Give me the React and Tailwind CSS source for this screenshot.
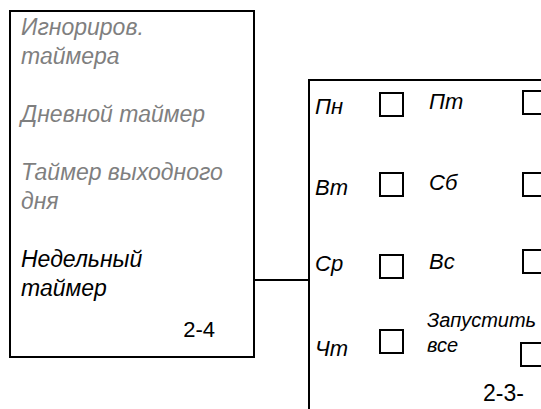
const font = { fontFamily: '"Liberation Sans", Arial, sans-serif' };

function Box() {
  return <div className="w-[25px] h-[25px] border-2 border-black shrink-0 bg-white" />;
}

function MenuItem({ lines, active }) {
  return (
    <div className={`italic text-[23px] leading-[29px] ${active ? "text-black" : "text-[#7f7f7f]"}`}>
      {lines.map((l) => (
        <div key={l} className="whitespace-nowrap">{l}</div>
      ))}
    </div>
  );
}

export default function App() {
  return (
    <div className="w-[541px] h-[409px] overflow-hidden bg-white flex items-start pt-[10px]" style={font}>
      <div className="ml-[9px] w-[246px] h-[348px] border-2 border-black shrink-0 flex flex-col pl-[10px] pt-[1px] gap-[29px]">
        <MenuItem lines={["Игнориров.", "таймера"]} />
        <MenuItem lines={["Дневной таймер"]} />
        <MenuItem lines={["Таймер выходного", "дня"]} />
        <div className="flex flex-col">
          <MenuItem lines={["Недельный", "таймер"]} active />
          <div className="text-[22px] leading-[29px] text-black self-end mr-[38px] mt-[12px]">2-4</div>
        </div>
      </div>

      <div className="w-[53px] h-[2px] bg-black mt-[269px] shrink-0" />

      <div className="mt-[69px] flex-1 h-[330px] border-l-2 border-t-2 border-black flex pl-[5px]">
        <div className="flex flex-col pt-[11px] w-[114px] shrink-0 italic text-[22px] leading-[25px]">
          <div className="h-[80px] flex items-start">
            <div className="w-[64px] mt-[2px]">Пн</div>
            <Box />
          </div>
          <div className="h-[82px] flex items-start">
            <div className="w-[64px] mt-[3px]">Вт</div>
            <Box />
          </div>
          <div className="h-[75px] flex items-start">
            <div className="w-[64px] mt-[-3px]">Ср</div>
            <Box />
          </div>
          <div className="flex items-start">
            <div className="w-[64px] mt-[7px]">Чт</div>
            <Box />
          </div>
        </div>

        <div className="flex flex-col pt-[8px] flex-1">
          <div className="italic text-[22px] leading-[25px]">
            <div className="h-[81px] flex items-start">
              <div className="w-[93px]">Пт</div>
              <div className="mt-[1px]"><Box /></div>
            </div>
            <div className="h-[79px] flex items-start">
              <div className="w-[93px]">Сб</div>
              <div className="mt-[2px]"><Box /></div>
            </div>
            <div className="h-[59px] flex items-start">
              <div className="w-[93px]">Вс</div>
              <Box />
            </div>
            <div className="flex items-start">
              <div className="w-[93px] text-[20px] leading-[25px] ml-[-2px]">
                <div className="whitespace-nowrap">Запустить</div>
                <div>все</div>
              </div>
              <div className="mt-[34px]"><Box /></div>
            </div>
          </div>
          <div className="text-[23px] leading-[29px] ml-[54px] mt-[12px]">2-3-</div>
        </div>
      </div>
    </div>
  );
}
